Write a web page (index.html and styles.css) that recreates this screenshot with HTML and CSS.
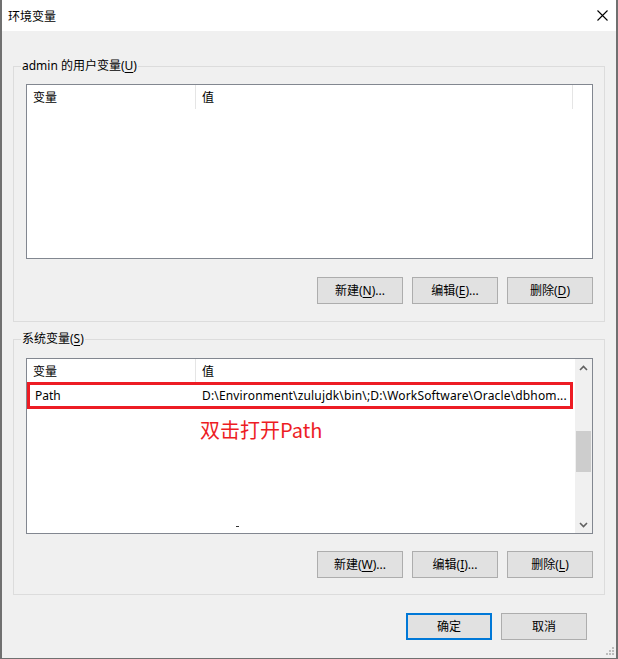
FILE: index.html
```html
<!DOCTYPE html>
<html lang="zh-CN">
<head>
<meta charset="utf-8">
<title>环境变量</title>
<link rel="stylesheet" href="styles.css">
</head>
<body>
<div class="window">
  <div class="titlebar">
    <span class="title">环境变量</span>
    <svg class="close" width="11" height="11" viewBox="0 0 11 11"><path d="M0.5 0.5 L10.5 10.5 M10.5 0.5 L0.5 10.5" stroke="#000" stroke-width="1.1" fill="none"/></svg>
  </div>
  <div class="content">
    <fieldset class="group group-user">
      <legend>admin 的用户变量(<u>U</u>)</legend>
      <div class="list list-user">
        <div class="list-main">
          <div class="header">
            <div class="hcell c1">变量</div>
            <div class="hcell c2">值</div>
            <div class="hcell c3"></div>
          </div>
        </div>
      </div>
      <div class="btnrow">
        <button class="btn">新建(<u>N</u>)...</button>
        <button class="btn">编辑(<u>E</u>)...</button>
        <button class="btn">删除(<u>D</u>)</button>
      </div>
    </fieldset>
    <fieldset class="group group-sys">
      <legend>系统变量(<u>S</u>)</legend>
      <div class="list list-sys">
        <div class="list-main">
          <div class="header">
            <div class="hcell c1">变量</div>
            <div class="hcell c2 last">值</div>
          </div>
          <div class="row">
            <div class="cell r1">Path</div>
            <div class="cell r2">D:\Environment\zulujdk\bin\;D:\WorkSoftware\Oracle\dbhom...</div>
          </div>
          <div class="note">双击打开Path</div>
          <div class="dash"></div>
        </div>
        <div class="scrollbar">
          <div class="arrow"><svg width="9" height="6" viewBox="0 0 9 6"><path d="M1 5 L4.5 1.5 L8 5" stroke="#606060" stroke-width="1.6" fill="none"/></svg></div>
          <div class="track"><div class="thumb"></div></div>
          <div class="arrow"><svg width="9" height="6" viewBox="0 0 9 6"><path d="M1 1 L4.5 4.5 L8 1" stroke="#606060" stroke-width="1.6" fill="none"/></svg></div>
        </div>
      </div>
      <div class="btnrow">
        <button class="btn">新建(<u>W</u>)...</button>
        <button class="btn">编辑(<u>I</u>)...</button>
        <button class="btn">删除(<u>L</u>)</button>
      </div>
    </fieldset>
    <div class="footer">
      <button class="btn btn-default">确定</button>
      <button class="btn">取消</button>
    </div>
  </div>
  <svg class="grip" width="8" height="8" viewBox="0 0 8 8">
    <rect x="6" y="0" width="2" height="2" fill="#bcbcbc"/>
    <rect x="3" y="3" width="2" height="2" fill="#bcbcbc"/>
    <rect x="6" y="3" width="2" height="2" fill="#bcbcbc"/>
    <rect x="0" y="6" width="2" height="2" fill="#bcbcbc"/>
    <rect x="3" y="6" width="2" height="2" fill="#bcbcbc"/>
    <rect x="6" y="6" width="2" height="2" fill="#bcbcbc"/>
  </svg>
</div>
</body>
</html>
```
FILE: styles.css
```css
* { box-sizing: border-box; }
html, body { margin: 0; padding: 0; background: #ffffff; }
body {
  font-family: "Noto Sans", "Noto Sans CJK SC", sans-serif;
  font-size: 12px;
  line-height: 16px;
  color: #000000;
}
.window {
  position: relative;
  width: 618px;
  height: 659px;
  border-style: solid;
  border-color: #707070;
  border-width: 0 2px 1px 2px;
  background: #f0f0f0;
  display: flex;
  flex-direction: column;
}
.titlebar {
  flex: none;
  height: 31px;
  background: #ffffff;
  display: flex;
  align-items: center;
  justify-content: space-between;
  padding: 0 8px 0 6px;
}
.title { font-family: "Noto Sans CJK SC", sans-serif; }
.close { display: block; }
.content {
  flex: 1;
  display: flex;
  flex-direction: column;
}
.group {
  margin: 0 11px;
  border: 1px solid #dcdcdc;
  padding: 10px 11px 17px 12px;
  min-width: 0;
}
.group-user { margin-top: 27px; }
.group-sys { margin-top: 9px; padding-top: 11px; padding-bottom: 16px; }
.group legend {
  padding: 0 1px;
  margin-left: -5px;
  line-height: 16px;
}
u { text-decoration: underline; text-underline-offset: 2px; }
.list {
  background: #ffffff;
  border: 1px solid #828790;
  display: flex;
}
.list-user { height: 175px; }
.list-sys { height: 176px; }
.list-main {
  flex: 1;
  min-width: 0;
  display: flex;
  flex-direction: column;
}
.header {
  flex: none;
  height: 24px;
  display: flex;
  align-items: stretch;
}
.hcell {
  display: flex;
  align-items: center;
  padding-left: 6px;
  padding-top: 2px;
  border-right: 1px solid #e5e5e5;
}
.hcell.c1 { width: 169px; }
.hcell.c2 { flex: 1; }
.hcell.c2.last { border-right: none; }
.hcell.c3 { width: 19px; border-right: none; }
.row {
  flex: none;
  height: 27px;
  width: 546px;
  margin-top: -1px;
  border: 3px solid #ed1c24;
  display: flex;
  align-items: center;
}
.cell { white-space: nowrap; overflow: hidden; }
.cell.r1 { width: 167px; padding-left: 5px; }
.cell.r2 { flex: 1; padding-left: 5px; letter-spacing: 0.16px; }
.note {
  flex: none;
  margin-top: 9px;
  padding-left: 173px;
  font-family: "Noto Sans CJK SC", sans-serif;
  font-size: 20px;
  line-height: 24px;
  color: #ed1c24;
}
.note-latin { letter-spacing: 0.8px; }
.dash {
  margin-top: auto;
  margin-bottom: 6px;
  margin-left: 209px;
  width: 3px;
  height: 1px;
  background: #333333;
}
.scrollbar {
  flex: none;
  width: 17px;
  background: #f0f0f0;
  display: flex;
  flex-direction: column;
}
.arrow {
  flex: none;
  height: 17px;
  display: flex;
  align-items: center;
  justify-content: center;
}
.track { flex: 1; padding-top: 55px; }
.thumb {
  width: 15px;
  height: 41px;
  margin-left: 1px;
  background: #cdcdcd;
}
.btnrow {
  display: flex;
  justify-content: flex-end;
  gap: 9px;
  margin-top: 18px;
}
.group-sys .btnrow { margin-top: 17px; }
.btn {
  width: 86px;
  height: 27px;
  padding: 0;
  margin: 0;
  border: 1px solid #adadad;
  background: #e1e1e1;
  font-family: "Noto Sans", "Noto Sans CJK SC", sans-serif;
  font-size: 12px;
  line-height: 16px;
  color: #000000;
}
.btn-default { border: 2px solid #0078d7; }
.footer {
  display: flex;
  justify-content: flex-end;
  gap: 9px;
  margin-top: 18px;
  padding-right: 29px;
}
.grip {
  position: absolute;
  right: 2px;
  bottom: 3px;
}
```
